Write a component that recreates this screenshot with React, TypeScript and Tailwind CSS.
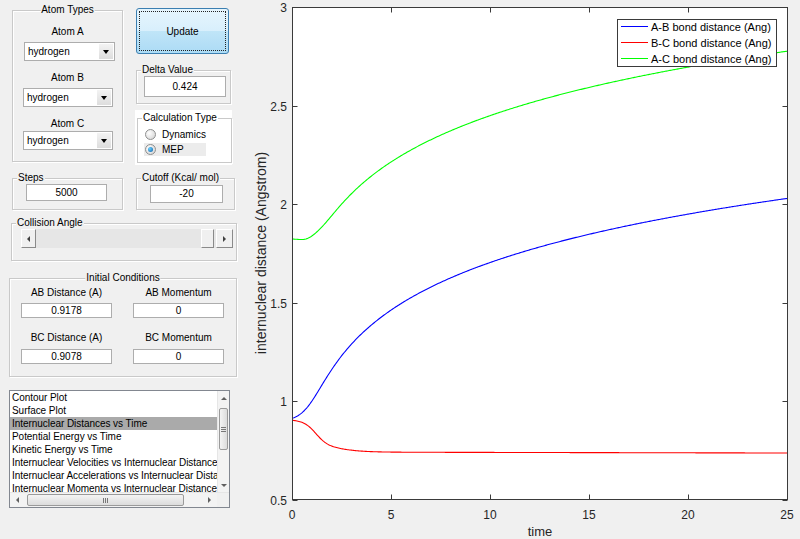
import React from "react";

const X = (t: number) => 52 + t * 19.8;
const Y = (v: number) => 7 + (3 - v) * 197;

const sig = (x: number) => 1 / (1 + Math.exp(-x));
const softplus = (x: number, w: number) => w * Math.log(1 + Math.exp(x / w));

const greenF = (t: number) => {
  const us = softplus(t - 1.3, 0.35);
  return 1.822 - 0.01 * Math.exp(-(((t - 0.7) / 0.5) ** 2)) + 0.3735 * Math.log(1 + us / 2);
};
const blueF = (t: number) => {
  const us = softplus(t - 0.85, 0.4);
  return 0.897 + 0.361 * Math.log(1 + us / 1.1);
};
const redF = (t: number) =>
  0.741 + 0.125 * sig((1.2 - t) / 0.3) + 0.04 * sig((2.2 - t) / 0.7) - 0.0002 * t;

function curve(f: (t: number) => number) {
  const pts: string[] = [];
  for (let i = 0; i <= 500; i++) {
    const t = (i / 500) * 25;
    pts.push(`${X(t).toFixed(2)},${Y(f(t)).toFixed(2)}`);
  }
  return "M" + pts.join(" L");
}

function Group({
  title,
  center,
  white,
  className,
  children,
}: {
  title: string;
  center?: boolean;
  white?: boolean;
  className: string;
  children?: React.ReactNode;
}) {
  return (
    <div
      className={`relative border border-[#c9c9c9] shadow-[inset_1px_1px_0_#ffffff,1px_1px_0_#ffffff] ${className}`}
    >
      <span
        className={`absolute -top-[7px] ${center ? "left-1/2 -translate-x-1/2" : "left-[4px]"} ${
          white ? "bg-white" : "bg-[#f0f0f0]"
        } px-[1px] text-[10px] leading-[12px] whitespace-nowrap`}
      >
        {title}
      </span>
      {children}
    </div>
  );
}

function Edit({ value, className }: { value: string; className: string }) {
  return (
    <div
      className={`flex items-center justify-center bg-white border border-[#adadad] text-[10px] leading-[12px] ${className}`}
    >
      {value}
    </div>
  );
}

function Dropdown({ className }: { className: string }) {
  return (
    <div className={`flex h-[19px] bg-white border border-[#adadad] ${className}`}>
      <div className="flex-1 flex items-center pl-[3px] text-[10px]">hydrogen</div>
      <div className="w-[14px] m-[1px] flex items-center justify-center bg-[linear-gradient(#f3f3f3,#dddddd)]">
        <div className="w-0 h-0 border-l-[3px] border-r-[3px] border-t-[4px] border-l-transparent border-r-transparent border-t-black" />
      </div>
    </div>
  );
}

function Radio({ on }: { on?: boolean }) {
  return (
    <div className="w-[11px] h-[11px] rounded-full border border-[#8e8f8f] bg-[radial-gradient(circle_at_35%_35%,#ffffff,#cfcfcf)] flex items-center justify-center">
      {on && (
        <div className="w-[5px] h-[5px] rounded-full bg-[radial-gradient(circle_at_35%_35%,#6ad0ff,#0a5ea8)]" />
      )}
    </div>
  );
}

function ArrowL({ c = "#404040" }: { c?: string }) {
  return (
    <div
      className="w-0 h-0 border-t-[3px] border-b-[3px] border-r-[3px] border-t-transparent border-b-transparent"
      style={{ borderRightColor: c }}
    />
  );
}
function ArrowR({ c = "#404040" }: { c?: string }) {
  return (
    <div
      className="w-0 h-0 border-t-[3px] border-b-[3px] border-l-[3px] border-t-transparent border-b-transparent"
      style={{ borderLeftColor: c }}
    />
  );
}
function ArrowU() {
  return (
    <div className="w-0 h-0 border-l-[3px] border-r-[3px] border-b-[3px] border-l-transparent border-r-transparent border-b-[#606060]" />
  );
}
function ArrowD() {
  return (
    <div className="w-0 h-0 border-l-[3px] border-r-[3px] border-t-[3px] border-l-transparent border-r-transparent border-t-[#606060]" />
  );
}

const items = [
  "Contour Plot",
  "Surface Plot",
  "Internuclear Distances vs Time",
  "Potential Energy vs Time",
  "Kinetic Energy vs Time",
  "Internuclear Velocities vs Internuclear Distance",
  "Internuclear Accelerations vs Internuclear Distance",
  "Internuclear Momenta vs Internuclear Distance",
];

function LeftPanel() {
  return (
    <div className="w-[240px] shrink-0 flex flex-col">
      {/* Row 1 */}
      <div className="flex items-start">
        <Group title="Atom Types" center className="ml-[12px] mt-[10px] w-[111px] h-[152px]">
          <div className="flex flex-col pt-[14px]">
            <div className="text-center text-[10px] leading-[13px]">Atom A</div>
            <Dropdown className="mt-[4px] ml-[11px] w-[91px]" />
            <div className="mt-[10px] text-center text-[10px] leading-[13px]">Atom B</div>
            <Dropdown className="mt-[4px] ml-[10px] w-[90px]" />
            <div className="mt-[10px] text-center text-[10px] leading-[13px]">Atom C</div>
            <Dropdown className="mt-[1px] ml-[10px] w-[90px]" />
          </div>
        </Group>
        <div className="ml-[13px] flex flex-col">
          <div className="mt-[8px] w-[93px] h-[46px] flex p-[2px] rounded-[3px] border border-[#3c7fb1] bg-[linear-gradient(#e6f5fd,#d8effc_50%,#c0e5f8_50%,#acdbf5)]">
            <div className="flex-1 flex items-center justify-center border border-dotted border-[#222] text-[10px]">
              Update
            </div>
          </div>
          <Group title="Delta Value" className="mt-[16px] w-[95px] h-[34px]">
            <Edit value="0.424" className="ml-[7px] mt-[5px] w-[82px] h-[21px]" />
          </Group>
          <div className="mt-[6px] -ml-px w-[97px] h-[55px] bg-white pt-[8px] pl-[2px]">
            <Group title="Calculation Type" white className="w-[95px] h-[45px]">
              <div className="flex flex-col pt-[8px] pl-[6px] text-[10px]">
                <div className="h-[14px] flex items-center">
                  <div className="ml-[1px]">
                    <Radio />
                  </div>
                  <span className="ml-[6px]">Dynamics</span>
                </div>
                <div className="mt-[2px] h-[13px] w-[62px] flex items-center bg-[#ececec]">
                  <div className="ml-[1px]">
                    <Radio on />
                  </div>
                  <span className="ml-[6px]">MEP</span>
                </div>
              </div>
            </Group>
          </div>
        </div>
      </div>

      {/* Row 2 */}
      <div className="flex mt-[13px]">
        <Group title="Steps" className="ml-[12px] w-[111px] h-[32px]">
          <Edit value="5000" className="ml-[13px] mt-[5px] w-[81px] h-[17px]" />
        </Group>
        <Group title="Cutoff (Kcal/ mol)" className="ml-[13px] w-[99px] h-[32px]">
          <Edit value="-20" className="ml-[13px] mt-[6px] w-[73px] h-[18px]" />
        </Group>
      </div>

      {/* Row 3 */}
      <Group title="Collision Angle" className="mt-[13px] ml-[11px] w-[226px] h-[38px]">
        <div className="flex ml-[9px] mt-[5px] w-[212px] h-[19px] bg-[#e6e6e6]">
          <div className="w-[15px] flex items-center justify-center bg-[#f0f0f0] border border-t-white border-l-white border-b-[#8a8a8a] border-r-[#8a8a8a]">
            <ArrowL />
          </div>
          <div className="flex-1" />
          <div className="w-[13px] bg-[#f0f0f0] border border-t-white border-l-white border-b-[#8a8a8a] border-r-[#8a8a8a]" />
          <div className="ml-[2px] w-[17px] flex items-center justify-center bg-[#f0f0f0] border border-t-white border-l-white border-b-[#8a8a8a] border-r-[#8a8a8a]">
            <ArrowR />
          </div>
        </div>
      </Group>

      {/* Row 4 */}
      <Group title="Initial Conditions" center className="mt-[17px] ml-[9px] w-[228px] h-[99px]">
        <div className="flex ml-[11px] pt-[7px] gap-x-[21px] text-[10px]">
          <div className="w-[91px] flex flex-col">
            <div className="text-center leading-[13px] whitespace-nowrap">AB Distance (A)</div>
            <Edit value="0.9178" className="mt-[4px] h-[15px]" />
            <div className="mt-[13px] text-center leading-[13px] whitespace-nowrap">BC Distance (A)</div>
            <Edit value="0.9078" className="mt-[5px] h-[15px]" />
          </div>
          <div className="w-[91px] flex flex-col">
            <div className="text-center leading-[13px] whitespace-nowrap">AB Momentum</div>
            <Edit value="0" className="mt-[4px] h-[15px]" />
            <div className="mt-[13px] text-center leading-[13px] whitespace-nowrap">BC Momentum</div>
            <Edit value="0" className="mt-[5px] h-[15px]" />
          </div>
        </div>
      </Group>

      {/* Row 5: listbox */}
      <div className="mt-[13px] ml-[9px] w-[221px] h-[118px] border border-[#828790] bg-white flex flex-col">
        <div className="flex h-[101px]">
          <div className="w-[207px] overflow-hidden flex flex-col text-[10px] tracking-[-0.05px]">
            {items.map((it, i) => (
              <div
                key={it}
                className={`shrink-0 h-[13px] leading-[13px] pl-[2px] whitespace-nowrap ${
                  i === 2 ? "bg-[#aaaaaa]" : ""
                }`}
              >
                {it}
              </div>
            ))}
          </div>
          <div className="w-[12px] flex flex-col bg-[#f3f3f3] border-l border-[#e6e6e6]">
            <div className="h-[15px] flex items-center justify-center">
              <ArrowU />
            </div>
            <div className="mt-[2px] mx-[1px] h-[42px] rounded-[2px] border border-[#9a9a9a] bg-[linear-gradient(90deg,#f4f4f4,#dcdcdc)] flex flex-col items-center justify-center gap-[1px]">
              <div className="w-[5px] h-px bg-[#777]" />
              <div className="w-[5px] h-px bg-[#777]" />
              <div className="w-[5px] h-px bg-[#777]" />
            </div>
            <div className="flex-1" />
            <div className="h-[14px] flex items-center justify-center">
              <ArrowD />
            </div>
          </div>
        </div>
        <div className="flex h-[15px] bg-[#f3f3f3] border-t border-[#e6e6e6]">
          <div className="w-[15px] flex items-center justify-center">
            <ArrowL c="#606060" />
          </div>
          <div className="ml-[2px] my-[1px] w-[157px] rounded-[2px] border border-[#9a9a9a] bg-[linear-gradient(#f4f4f4,#dcdcdc)] flex items-center justify-center gap-[1px]">
            <div className="w-px h-[5px] bg-[#777]" />
            <div className="w-px h-[5px] bg-[#777]" />
            <div className="w-px h-[5px] bg-[#777]" />
          </div>
          <div className="flex-1" />
          <div className="w-[15px] flex items-center justify-center">
            <ArrowR c="#606060" />
          </div>
          <div className="w-[12px] bg-[#f0f0f0]" />
        </div>
      </div>
    </div>
  );
}

function Chart() {
  const yt = [3, 2.5, 2, 1.5, 1, 0.5];
  const xt = [0, 5, 10, 15, 20, 25];
  const font = "'Liberation Sans', Arial, sans-serif";
  const ax = "#3a3a3a";
  return (
    <svg width={560} height={539} className="shrink-0 block">
      <defs>
        <clipPath id="plotclip">
          <rect x={52.5} y={7.5} width={495} height={492} />
        </clipPath>
      </defs>
      <rect x={52.5} y={7.5} width={495} height={492} fill="#ffffff" />
      <g clipPath="url(#plotclip)" fill="none" strokeWidth={1.1} strokeLinejoin="round">
        <path d={curve(greenF)} stroke="#00ff00" />
        <path d={curve(redF)} stroke="#ff0000" />
        <path d={curve(blueF)} stroke="#0000ff" />
      </g>
      <g stroke={ax} strokeWidth={1}>
        {yt.map((v) => {
          const y = Math.round(Y(v)) + 0.5;
          return (
            <g key={v}>
              <line x1={52.5} y1={y} x2={57.5} y2={y} />
              <line x1={547.5} y1={y} x2={542.5} y2={y} />
            </g>
          );
        })}
        {xt.map((t) => {
          const x = Math.round(X(t)) + 0.5;
          return (
            <g key={t}>
              <line x1={x} y1={499.5} x2={x} y2={494.5} />
              <line x1={x} y1={7.5} x2={x} y2={12.5} />
            </g>
          );
        })}
        <rect x={52.5} y={7.5} width={495} height={492} fill="none" />
      </g>
      <g fill="#262626" fontFamily={font} fontSize={12}>
        {yt.map((v) => (
          <text key={v} x={47} y={Y(v) + 1} textAnchor="end" dominantBaseline="central">
            {String(v)}
          </text>
        ))}
        {xt.map((t) => (
          <text key={t} x={X(t)} y={515} textAnchor="middle" dominantBaseline="central">
            {String(t)}
          </text>
        ))}
        <text x={300} y={531} fontSize={13} textAnchor="middle" dominantBaseline="central">
          time
        </text>
        <text
          x={21}
          y={253}
          fontSize={14}
          textAnchor="middle"
          dominantBaseline="central"
          transform="rotate(-90 21 253)"
        >
          internuclear distance (Angstrom)
        </text>
      </g>
      <g>
        <rect x={377.5} y={19.5} width={159} height={47} fill="#ffffff" stroke={ax} strokeWidth={1} />
        <line x1={381} y1={26.5} x2={408} y2={26.5} stroke="#0000ff" />
        <line x1={381} y1={42.5} x2={408} y2={42.5} stroke="#ff0000" />
        <line x1={381} y1={58.5} x2={408} y2={58.5} stroke="#00ff00" />
        <g fill="#000" fontFamily={font} fontSize={11}>
          <text x={411} y={27} dominantBaseline="central">A-B bond distance (Ang)</text>
          <text x={411} y={43} dominantBaseline="central">B-C bond distance (Ang)</text>
          <text x={411} y={59} dominantBaseline="central">A-C bond distance (Ang)</text>
        </g>
      </g>
    </svg>
  );
}

export default function App() {
  return (
    <div
      className="w-[800px] h-[539px] bg-[#f0f0f0] flex overflow-hidden text-black text-[10px]"
      style={{ fontFamily: "'Liberation Sans', Arial, sans-serif" }}
    >
      <LeftPanel />
      <Chart />
    </div>
  );
}
